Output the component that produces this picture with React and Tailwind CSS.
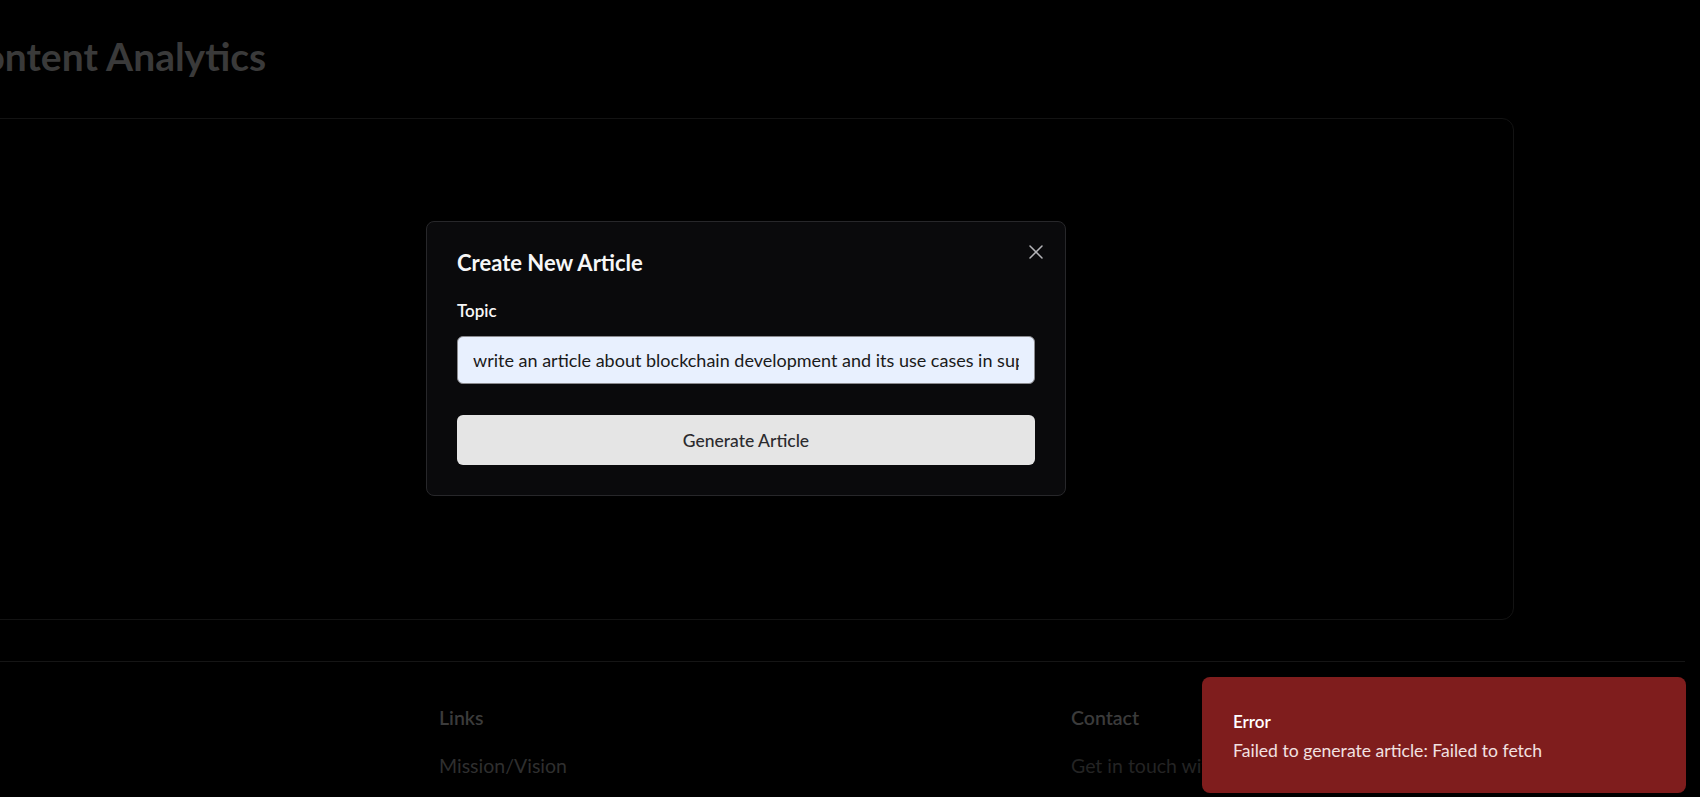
import React, { useState } from 'react';

const font = { fontFamily: 'Lato, "Noto Sans", sans-serif' };

const CloseIcon = () => (
    <svg width="14" height="14" viewBox="0 0 14 14" fill="none" stroke="#b4b4b8" strokeWidth="1.5" strokeLinecap="round">
        <path d="M1 1 13 13" />
        <path d="M13 1 1 13" />
    </svg>
);

const App = () => {
    const [topic, setTopic] = useState(
        'write an article about blockchain development and its use cases in supply chain management'
    );

    return (
        <div className="relative w-[1700px] h-[797px] overflow-hidden bg-black" style={font}>
            {/* page under the overlay */}
            <div className="ml-[-43px] w-[1557px] pt-[33px]">
                <h1 className="text-[39px] leading-[46px] font-bold text-[#3a3a3a]">Content Analytics</h1>
                <div className="mt-[39px] h-[502px] rounded-xl border border-[#131313]"></div>
            </div>

            <footer className="mt-[41px] w-[1685px] border-t border-[#151515]">
                <div className="grid grid-cols-[632px_1fr] pl-[439px] pt-[43px]">
                    <div className="flex flex-col gap-[22px]">
                        <p className="text-[19.5px] leading-[26px] font-semibold text-[#3b3b3b]">Links</p>
                        <p className="text-[19.5px] leading-[26px] text-[#2f2f2f]">Mission/Vision</p>
                    </div>
                    <div className="flex flex-col gap-[22px]">
                        <p className="text-[19.5px] leading-[26px] font-semibold text-[#3b3b3b]">Contact</p>
                        <p className="text-[19.5px] leading-[26px] text-[#242424]">Get in touch with us</p>
                    </div>
                </div>
            </footer>

            {/* dialog */}
            <div className="absolute left-[426px] top-[221px] w-[640px] rounded-lg border border-[#27272a] bg-[#0a0a0c] px-[30px] pt-[27px] pb-[30px]">
                <button className="absolute right-[21px] top-[22px] p-[1px]">
                    <CloseIcon />
                </button>
                <h2 className="text-[22px] leading-[28px] font-bold text-[#f7f7f7]">Create New Article</h2>
                <label className="mt-[22px] block text-[17px] leading-[24px] font-semibold text-[#f7f7f7]">Topic</label>
                <input
                    className="mt-[13px] block w-full h-[48px] rounded-md border border-[#8a8a8e] bg-[#e8f0fe] px-[15px] text-[18px] text-[#1a1a1a] outline-none"
                    style={font}
                    value={topic}
                    onChange={(e) => setTopic(e.target.value)}
                />
                <button
                    className="mt-[31px] w-full h-[50px] rounded-md bg-[#e5e5e5] pt-[3px] text-[17.5px] font-medium text-[#2b2b2e]"
                    style={font}
                >
                    Generate Article
                </button>
            </div>

            {/* toast */}
            <div className="absolute left-[1202px] top-[677px] w-[484px] h-[116px] rounded-lg bg-[#7f1d1d] pl-[31px] pt-[33px]">
                <p className="text-[17px] leading-[24px] font-semibold text-white">Error</p>
                <p className="mt-[5px] text-[17.6px] leading-[24px] text-[#f2e1e1]">Failed to generate article: Failed to fetch</p>
            </div>
        </div>
    );
};

export default App;
